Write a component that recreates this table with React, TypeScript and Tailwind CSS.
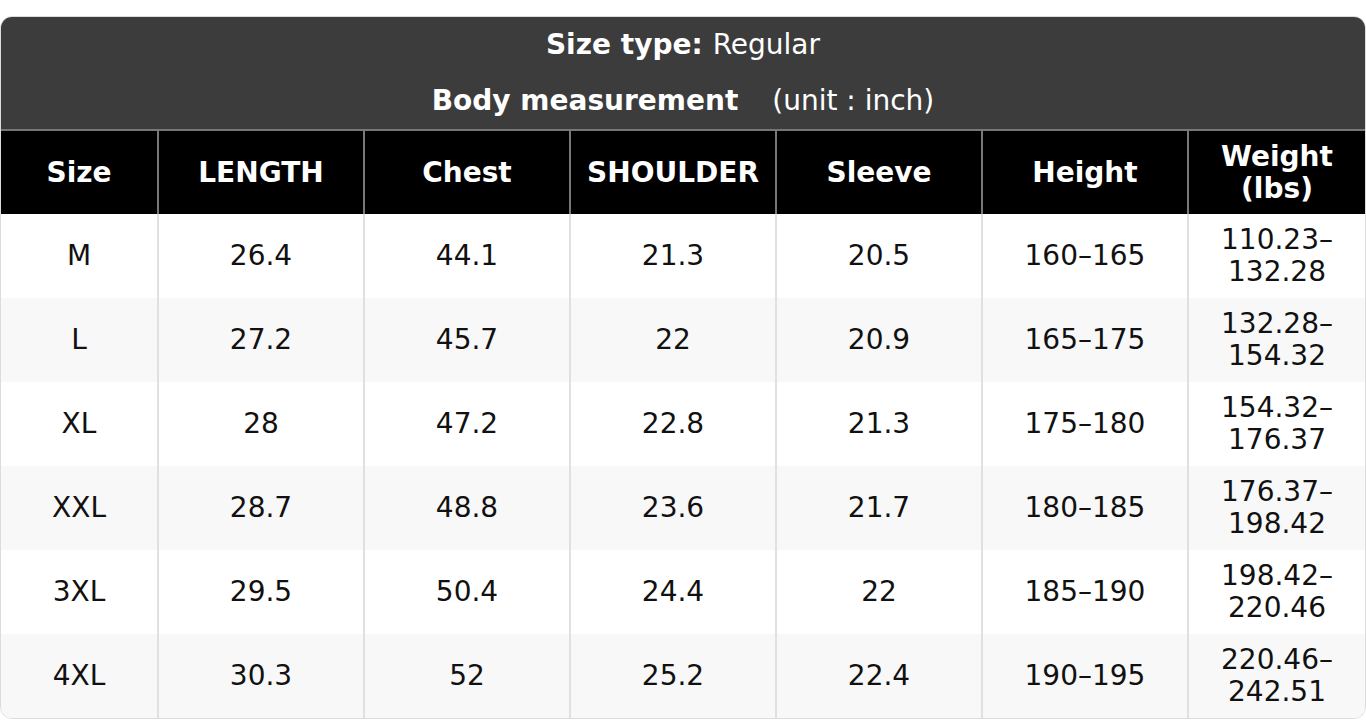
import React from 'react';

const headers = ['Size', 'LENGTH', 'Chest', 'SHOULDER', 'Sleeve', 'Height'];

const rows: string[][] = [
  ['M', '26.4', '44.1', '21.3', '20.5', '160–165', '110.23–', '132.28'],
  ['L', '27.2', '45.7', '22', '20.9', '165–175', '132.28–', '154.32'],
  ['XL', '28', '47.2', '22.8', '21.3', '175–180', '154.32–', '176.37'],
  ['XXL', '28.7', '48.8', '23.6', '21.7', '180–185', '176.37–', '198.42'],
  ['3XL', '29.5', '50.4', '24.4', '22', '185–190', '198.42–', '220.46'],
  ['4XL', '30.3', '52', '25.2', '22.4', '190–195', '220.46–', '242.51'],
];

export default function App() {
  return (
    <div className="pt-4 bg-white" style={{ fontFamily: '"DejaVu Sans", sans-serif' }}>
      <div className="rounded-xl overflow-hidden border border-[#dcdcdc] text-[28px] leading-8">
        <div className="bg-[#3c3c3c] text-white text-center">
          <div className="h-14 flex items-center justify-center">
            <span className="font-bold">Size type:</span>
            <span className="ml-2.5">Regular</span>
          </div>
          <div className="h-14 flex items-center justify-center">
            <span className="font-bold">Body measurement</span>
            <span className="ml-[34px]">(unit : inch)</span>
          </div>
        </div>
        <table className="w-full table-fixed border-collapse text-center">
          <colgroup>
            <col className="w-[157px]" />
            <col className="w-[206px]" />
            <col className="w-[206px]" />
            <col className="w-[206px]" />
            <col className="w-[206px]" />
            <col className="w-[206px]" />
            <col />
          </colgroup>
          <thead>
            <tr className="bg-black text-white border-t-2 border-[#777]">
              {headers.map((h, i) => (
                <th
                  key={h}
                  className={`h-[84px] font-bold border-[#777] ${i > 0 ? 'border-l-2' : ''}`}
                >
                  {h}
                </th>
              ))}
              <th className="h-[84px] font-bold border-l-2 border-[#777]">
                Weight
                <br />
                (lbs)
              </th>
            </tr>
          </thead>
          <tbody className="text-[#111]">
            {rows.map((r, ri) => (
              <tr key={r[0]} className={ri % 2 === 1 ? 'bg-[#f8f8f8]' : 'bg-white'}>
                {r.slice(0, 6).map((c, ci) => (
                  <td
                    key={ci}
                    className={`h-[84px] ${ci > 0 ? 'border-l-2 border-[#e0e0e0]' : ''}`}
                  >
                    {c}
                  </td>
                ))}
                <td className="h-[84px] border-l-2 border-[#e0e0e0]">
                  {r[6]}
                  <br />
                  {r[7]}
                </td>
              </tr>
            ))}
          </tbody>
        </table>
      </div>
    </div>
  );
}
